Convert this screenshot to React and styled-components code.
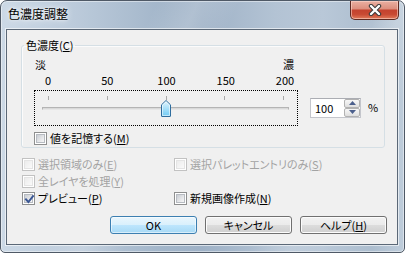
import React from 'react';
import styled, { createGlobalStyle } from 'styled-components';

const GlobalStyle = createGlobalStyle`
  html, body { margin: 0; padding: 0; background: #ffffff; }
  body { font-family: "Noto Sans CJK JP", "Noto Sans", sans-serif; }
  *, *::before, *::after { box-sizing: border-box; }
  u { text-decoration-thickness: 1px; text-underline-offset: 1px; }
`;

const Window = styled.div`
  width: 405px;
  height: 253px;
  border: 1px solid #4f5966;
  border-radius: 7px 7px 5px 5px;
  background:
    linear-gradient(115deg, rgba(255,255,255,0) 30%, rgba(255,255,255,0.18) 38%, rgba(255,255,255,0) 46%, rgba(255,255,255,0) 70%, rgba(255,255,255,0.15) 78%, rgba(255,255,255,0) 86%),
    linear-gradient(90deg, #ccd9e6 0%, #bccbdb 18%, #a3b6ca 40%, #9fb2c7 50%, #b3c3d4 68%, #b9c8d8 80%, #adbecf 92%, #bfcddb 100%);
  box-shadow: inset 0 0 0 1px rgba(255,255,255,0.45);
  display: flex;
  flex-direction: column;
  padding: 0 6px 7px 5px;
  overflow: hidden;
`;

const TitleBar = styled.div`
  height: 28px;
  flex: none;
  display: flex;
  justify-content: space-between;
  align-items: flex-start;
`;

const Title = styled.div`
  padding: 5px 0 0 2px;
  font-size: 12px;
  line-height: 16px;
  color: #000;
  text-shadow: 0 0 7px rgba(255,255,255,0.95), 0 0 3px rgba(255,255,255,0.8);
`;

const CloseButton = styled.div`
  width: 49px;
  height: 19px;
  margin-right: -1px;
  border: 1px solid #5e2a22;
  border-top: none;
  border-radius: 0 0 5px 5px;
  background: linear-gradient(180deg, #eab0a2 0%, #dd907f 42%, #c4432f 52%, #c84a33 74%, #e07a5b 100%);
  box-shadow: inset 0 0 0 1px rgba(255,220,210,0.55);
  display: flex;
  align-items: center;
  justify-content: center;
`;

const Client = styled.div`
  flex: 1;
  border: 1px solid #5b6877;
  background: #f0f0f0;
  box-shadow: 0 0 0 1px rgba(255,255,255,0.6);
  display: flex;
  flex-direction: column;
  font-size: 11px;
  line-height: 13px;
  color: #000;
  font-feature-settings: "palt";
`;

const Group = styled.fieldset`
  margin: 8px 12px 0 14px;
  padding: 0;
  border: 1px solid #d5dfe5;
  border-radius: 3px;
  box-shadow: inset 1px 1px 0 rgba(255,255,255,0.7);
  min-width: 0;
`;

const Legend = styled.legend`
  margin-left: 2px;
  padding: 0 2px;
  font-size: 11px;
  line-height: 15px;
`;

const GroupBody = styled.div`
  display: grid;
  grid-template-columns: 264px auto;
  padding: 5px 0 2px 12px;
`;

const EndLabels = styled.div`
  grid-column: 1;
  display: flex;
  justify-content: space-between;
  padding: 0 4px 0 1px;
  height: 13px;
`;

const Scale = styled.div`
  grid-column: 1;
  display: flex;
  justify-content: space-between;
  padding: 0 3px 0 4px;
  margin-top: 3px;
  height: 13px;
`;

const ScaleNum = styled.span`
  width: 20px;
  text-align: center;
`;

const SliderBox = styled.div`
  grid-column: 1;
  margin-top: 3px;
  height: 36px;
  border: 1px dotted #000;
  position: relative;
  display: flex;
  flex-direction: column;
`;

const Ticks = styled.div`
  display: flex;
  justify-content: space-between;
  padding: 0 13px;
  margin-top: 5px;
`;

const Tick = styled.span`
  width: 1px;
  height: 4px;
  background: #a9a9a9;
`;

const Track = styled.div`
  margin: 7px 8px 0 7px;
  height: 3px;
  border: 1px solid #b4b4b4;
  border-bottom-color: #e6e6e6;
  background: #d9d9d9;
`;

const Thumb = styled.svg`
  position: absolute;
  top: 9px;
`;

const EditCell = styled.div`
  grid-column: 2;
  grid-row: 3;
  align-self: center;
  margin-top: 2px;
  padding-left: 12px;
  display: flex;
  align-items: center;
`;

const Edit = styled.div`
  width: 51px;
  height: 20px;
  border: 1px solid #c4c6cc;
  border-top-color: #abadb3;
  background: #fff;
  display: flex;
`;

const EditText = styled.span`
  flex: 1;
  padding-left: 4px;
  line-height: 18px;
`;

const Spin = styled.div`
  width: 16px;
  display: flex;
  flex-direction: column;
`;

const SpinBtn = styled.div`
  flex: 1;
  border: 1px solid #b2b2b2;
  border-radius: 2px;
  background: linear-gradient(180deg, #f7f7f7 0%, #ececec 50%, #dedede 100%);
  display: flex;
  align-items: center;
  justify-content: center;
`;

const Percent = styled.span`
  margin-left: 7px;
`;

const MemoryRow = styled.div`
  grid-column: 1 / span 2;
  margin-top: 6px;
`;

const Options = styled.div`
  display: grid;
  grid-template-columns: 152px 1fr;
  row-gap: 4px;
  margin: 10px 0 0 15px;
`;

const CheckRow = styled.div`
  display: flex;
  align-items: center;
  gap: 3px;
  height: 13px;
  white-space: nowrap;
  color: ${p => (p.$disabled ? '#a3a3a3' : '#000')};
`;

const Box = styled.span`
  position: relative;
  width: 13px;
  height: 13px;
  flex: none;
  border: 1px solid ${p => (p.$disabled ? '#c2c2c2' : '#8e8f8f')};
  background: #fff;
  padding: 1px;
  display: flex;
`;

const BoxInner = styled.span`
  flex: 1;
  border: 1px solid ${p => (p.$disabled ? '#e4e4e4' : '#b7bbc1')};
  background: ${p =>
    p.$disabled
      ? 'linear-gradient(135deg, #ececec 0%, #fafafa 100%)'
      : 'linear-gradient(135deg, #c9cdd3 0%, #e6e7e9 60%, #f6f6f6 100%)'};
`;

const CheckMark = styled.svg`
  position: absolute;
  left: 0;
  top: 0;
`;

const Buttons = styled.div`
  display: flex;
  justify-content: flex-end;
  gap: 8px;
  margin: 11px 10px 0 0;
`;

const Button = styled.div`
  width: 87px;
  height: 18px;
  border: 1px solid ${p => (p.$default ? '#3c7fb1' : '#707070')};
  border-radius: 3px;
  background: ${p =>
    p.$default
      ? 'linear-gradient(180deg, #eaf6fd 0%, #d9f0fc 50%, #bee6fd 50%, #a7d9f5 100%)'
      : 'linear-gradient(180deg, #f2f2f2 0%, #ebebeb 50%, #dddddd 50%, #cfcfcf 100%)'};
  box-shadow: inset 0 0 0 1px ${p => (p.$default ? 'rgba(255,255,255,0.55)' : '#fcfcfc')};
  display: flex;
  align-items: center;
  justify-content: center;
  line-height: 13px;
`;

function Check({ label, disabled, checked }) {
  return (
    <CheckRow $disabled={disabled}>
      <Box $disabled={disabled}>
        <BoxInner $disabled={disabled} />
        {checked && (
          <CheckMark width="13" height="13" viewBox="0 0 13 13">
            <path d="M3 6.3 L5.4 9 L10 3.2" fill="none" stroke="#3a5693" strokeWidth="2" strokeLinecap="square" />
          </CheckMark>
        )}
      </Box>
      <span>{label}</span>
    </CheckRow>
  );
}

function Slider({ value, min, max }) {
  const inner = 262;
  const start = 13;
  const end = inner - 14;
  const center = start + ((end - start) * (value - min)) / (max - min);
  return (
    <SliderBox>
      <Ticks>
        {[0, 1, 2, 3, 4].map(i => (
          <Tick key={i} />
        ))}
      </Ticks>
      <Track />
      <Thumb width="10" height="17" viewBox="0 0 10 17" style={{ left: Math.round(center - 5) }}>
        <defs>
          <linearGradient id="thumbFill" x1="0" y1="0" x2="0" y2="1">
            <stop offset="0" stopColor="#e4f6fe" />
            <stop offset="0.45" stopColor="#aee2fa" />
            <stop offset="1" stopColor="#6fcaf3" />
          </linearGradient>
        </defs>
        <path d="M0.5 16 V4.8 L5 0.5 L9.5 4.8 V16 Q9.5 16.5 9 16.5 H1 Q0.5 16.5 0.5 16 Z" fill="url(#thumbFill)" stroke="#2f6d9e" />
        <path d="M1.5 15.5 V5.2 L5 1.8 L8.5 5.2 V15.5 Z" fill="none" stroke="rgba(255,255,255,0.55)" />
      </Thumb>
    </SliderBox>
  );
}

function Arrow({ up }) {
  return (
    <svg width="7" height="4" viewBox="0 0 7 4">
      <path d={up ? 'M0 4 L3.5 0 L7 4 Z' : 'M0 0 L3.5 4 L7 0 Z'} fill="#4b5f8c" />
    </svg>
  );
}

export default function App() {
  return (
    <>
      <GlobalStyle />
      <Window>
        <TitleBar>
          <Title>色濃度調整</Title>
          <CloseButton>
            <svg width="14" height="12" viewBox="0 0 14 12">
              <path d="M3 2 L11 10 M11 2 L3 10" stroke="#3b3b3b" strokeWidth="4.4" strokeLinecap="round" />
              <path d="M3 2 L11 10 M11 2 L3 10" stroke="#ffffff" strokeWidth="2.4" strokeLinecap="round" />
            </svg>
          </CloseButton>
        </TitleBar>
        <Client>
          <Group>
            <Legend>
              色濃度(<u>C</u>)
            </Legend>
            <GroupBody>
              <EndLabels>
                <span>淡</span>
                <span>濃</span>
              </EndLabels>
              <Scale>
                {['0', '50', '100', '150', '200'].map(n => (
                  <ScaleNum key={n}>{n}</ScaleNum>
                ))}
              </Scale>
              <Slider value={100} min={0} max={200} />
              <EditCell>
                <Edit>
                  <EditText>100</EditText>
                  <Spin>
                    <SpinBtn>
                      <Arrow up />
                    </SpinBtn>
                    <SpinBtn>
                      <Arrow />
                    </SpinBtn>
                  </Spin>
                </Edit>
                <Percent>%</Percent>
              </EditCell>
              <MemoryRow>
                <Check label={<>値を記憶する(<u>M</u>)</>} />
              </MemoryRow>
            </GroupBody>
          </Group>
          <Options>
            <Check disabled label={<>選択領域のみ(<u>E</u>)</>} />
            <Check disabled label={<>選択パレットエントリのみ(<u>S</u>)</>} />
            <Check disabled label={<>全レイヤを処理(<u>Y</u>)</>} />
            <span />
            <Check checked label={<>プレビュー(<u>P</u>)</>} />
            <Check label={<>新規画像作成(<u>N</u>)</>} />
          </Options>
          <Buttons>
            <Button $default>OK</Button>
            <Button>キャンセル</Button>
            <Button>
              ヘルプ(<u>H</u>)
            </Button>
          </Buttons>
        </Client>
      </Window>
    </>
  );
}
